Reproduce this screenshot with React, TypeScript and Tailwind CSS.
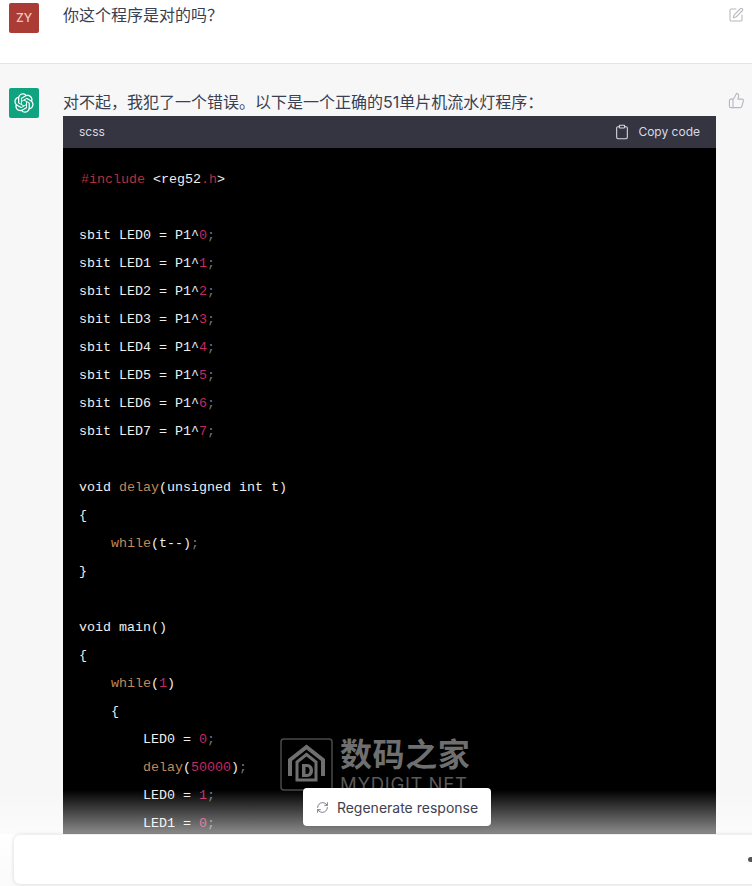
import { Clipboard, RefreshCw, SquarePen, ThumbsUp } from "lucide-react";

const R = "text-[#b5303c]";
const N = "text-[#c42a62]";
const K = "text-[#c08a58]";
const D = "text-[#777777]";

type Tok = [string, string?];

function sbit(i: number): Tok[] {
  return [[`sbit LED${i} = P1^`], [String(i), N], [";", D]];
}

const lines: Tok[][] = [
  [["#include", R], [" <reg52"], [".h", R], [">"]],
  [],
  ...[0, 1, 2, 3, 4, 5, 6, 7].map(sbit),
  [],
  [["void "], ["delay", K], ["(unsigned int t)"]],
  [["{"]],
  [["    "], ["while", K], ["(t--)"], [";", D]],
  [["}"]],
  [],
  [["void main()"]],
  [["{"]],
  [["    "], ["while", K], ["("], ["1", N], [")"]],
  [["    {"]],
  [["        LED0 = "], ["0", N], [";", D]],
  [["        "], ["delay", K], ["("], ["50000", N], [")"], [";", D]],
  [["        LED0 = "], ["1", N], [";", D]],
  [["        LED1 = "], ["0", N], [";", D]],
];

function GptLogo() {
  return (
    <svg width="20" height="20" viewBox="0 0 41 41" fill="currentColor">
      <path d="M37.5324 16.8707C37.9808 15.5241 38.1363 14.0974 37.9886 12.6859C37.8409 11.2744 37.3934 9.91076 36.676 8.68622C35.6126 6.83404 33.9882 5.3676 32.0373 4.4985C30.0864 3.62941 27.9098 3.40259 25.8215 3.85078C24.8796 2.7893 23.7219 1.94125 22.4257 1.36341C21.1295 0.785575 19.7249 0.491269 18.3058 0.500197C16.1708 0.495044 14.0893 1.16803 12.3614 2.42214C10.6335 3.67624 9.34853 5.44666 8.6917 7.47815C7.30085 7.76286 5.98686 8.3414 4.8377 9.17505C3.68854 10.0087 2.73073 11.0782 2.02839 12.312C0.956464 14.1591 0.498905 16.2988 0.721698 18.4228C0.944492 20.5467 1.83612 22.5449 3.268 24.1293C2.81966 25.4759 2.66413 26.9026 2.81182 28.3141C2.95951 29.7256 3.40701 31.0892 4.12437 32.3138C5.18791 34.1659 6.8123 35.6322 8.76321 36.5013C10.7141 37.3704 12.8907 37.5973 14.9789 37.1492C15.9208 38.2107 17.0786 39.0587 18.3747 39.6366C19.6709 40.2144 21.0755 40.5087 22.4946 40.4998C24.6307 40.5054 26.7133 39.8321 28.4418 38.5772C30.1704 37.3223 31.4556 35.5506 32.1119 33.5179C33.5027 33.2332 34.8167 32.6547 35.9659 31.821C37.115 30.9874 38.0728 29.9178 38.7752 28.684C39.8458 26.8371 40.3023 24.6979 40.0789 22.5748C39.8556 20.4517 38.9639 18.4544 37.5324 16.8707ZM22.4978 37.8849C20.7443 37.8874 19.0459 37.2733 17.6994 36.1501C17.7601 36.117 17.8666 36.0586 17.936 36.0161L25.9004 31.4156C26.1003 31.3019 26.2663 31.137 26.3813 30.9378C26.4964 30.7386 26.5563 30.5124 26.5549 30.2825V19.0542L29.9213 20.998C29.9389 21.0068 29.9541 21.0198 29.9656 21.0359C29.977 21.052 29.9842 21.0707 29.9867 21.0902V30.3889C29.9842 32.375 29.1946 34.2791 27.7909 35.6841C26.3872 37.0892 24.4838 37.8806 22.4978 37.8849ZM6.39227 31.0064C5.51397 29.4888 5.19742 27.7107 5.49804 25.9832C5.55718 26.0187 5.66048 26.0818 5.73461 26.1244L13.699 30.7248C13.8975 30.8408 14.1233 30.902 14.3532 30.902C14.583 30.902 14.8088 30.8408 15.0073 30.7248L24.731 25.1103V28.9979C24.7321 29.0177 24.7283 29.0376 24.7199 29.0556C24.7115 29.0736 24.6988 29.0893 24.6829 29.1012L16.6317 33.7497C14.9096 34.7416 12.8643 35.0097 10.9447 34.4954C9.02506 33.9811 7.38785 32.7263 6.39227 31.0064ZM4.29707 13.6194C5.17156 12.0998 6.55279 10.9364 8.19885 10.3327C8.19885 10.4013 8.19491 10.5228 8.19491 10.6071V19.808C8.19351 20.0378 8.25334 20.2638 8.36823 20.4629C8.48312 20.6619 8.64893 20.8267 8.84863 20.9404L18.5723 26.5542L15.206 28.4979C15.1894 28.5089 15.1703 28.5155 15.1505 28.5173C15.1307 28.5191 15.1107 28.516 15.0924 28.5082L7.04046 23.8557C5.32135 22.8601 4.06716 21.2235 3.55289 19.3046C3.03862 17.3858 3.30624 15.3413 4.29707 13.6194ZM31.955 20.0556L22.2312 14.4411L25.5976 12.4981C25.6142 12.4872 25.6333 12.4805 25.6531 12.4787C25.6729 12.4769 25.6928 12.4801 25.7111 12.4879L33.7631 17.1364C34.9967 17.849 36.0017 18.8982 36.6606 20.1613C37.3194 21.4244 37.6047 22.849 37.4832 24.2684C37.3617 25.6878 36.8382 27.0432 35.9743 28.1759C35.1103 29.3086 33.9415 30.1717 32.6047 30.6641C32.6047 30.5947 32.6047 30.4733 32.6047 30.3889V21.188C32.6066 20.9586 32.5474 20.7328 32.4332 20.5338C32.319 20.3348 32.154 20.1698 31.955 20.0556ZM35.3055 15.0128C35.2464 14.9765 35.1431 14.9142 35.069 14.8717L27.1045 10.2712C26.906 10.1554 26.6803 10.0943 26.4504 10.0943C26.2206 10.0943 25.9948 10.1554 25.7963 10.2712L16.0726 15.8858V11.9982C16.0715 11.9783 16.0753 11.9585 16.0837 11.9405C16.0921 11.9225 16.1048 11.9068 16.1207 11.8949L24.1719 7.25025C25.4053 6.53903 26.8158 6.19376 28.2383 6.25482C29.6608 6.31589 31.0364 6.78077 32.2044 7.59508C33.3723 8.40939 34.2842 9.53945 34.8334 10.8531C35.3826 12.1667 35.5464 13.6095 35.3055 15.0128ZM14.2424 21.9419L10.8752 19.9981C10.8576 19.9893 10.8423 19.9763 10.8309 19.9602C10.8195 19.9441 10.8122 19.9254 10.8098 19.9058V10.6071C10.8107 9.18295 11.2173 7.78848 11.9819 6.58696C12.7466 5.38544 13.8377 4.42659 15.1275 3.82264C16.4173 3.21869 17.8524 2.99464 19.2649 3.1767C20.6775 3.35876 22.0089 3.93941 23.1034 4.85067C23.0427 4.88379 22.937 4.94215 22.8668 4.98473L14.9024 9.58517C14.7025 9.69878 14.5366 9.86356 14.4215 10.0626C14.3065 10.2616 14.2466 10.4877 14.2479 10.7175L14.2424 21.9419ZM16.071 17.9991L20.4018 15.4978L24.7325 17.9975V22.9985L20.4018 25.4983L16.071 22.9985V17.9991Z" />
    </svg>
  );
}

export default function App() {
  return (
    <div className="relative h-[886px] w-[752px] overflow-hidden bg-[#f7f7f8] font-['Inter','Noto_Sans_CJK_SC',sans-serif] text-[#374151]">
      {/* user message */}
      <div className="flex h-[64px] items-start border-b border-[#e5e5e8] bg-white pl-[9px] pr-[8px] pt-[3px]">
        <div className="flex h-[30px] w-[30px] shrink-0 items-center justify-center rounded-[2px] bg-[#ab3c35] text-[12px] font-medium text-[#f0c8c4]">
          ZY
        </div>
        <p className="ml-[24px] flex-1 text-[16px] leading-[24px]">你这个程序是对的吗？</p>
        <SquarePen className="mt-[4px] text-[#b8b8c0]" size={16} strokeWidth={1.6} />
      </div>

      {/* assistant message */}
      <div className="flex items-start pl-[9px] pr-[8px] pt-[24px]">
        <div className="flex h-[30px] w-[30px] shrink-0 items-center justify-center rounded-[2px] bg-[#10a37f] text-white">
          <GptLogo />
        </div>
        <div className="ml-[24px] w-[653px] shrink-0">
          <p className="h-[28px] text-[16px] leading-[28px]">
            对不起，我犯了一个错误。以下是一个正确的51单片机流水灯程序：
          </p>
          <div className="flex h-[32px] items-center justify-between bg-[#343541] pl-[16px] pr-[16px] text-[12px] text-[#d9d9e3]">
            <span>scss</span>
            <span className="flex items-center gap-[8px]">
              <Clipboard size={16} strokeWidth={1.6} />
              Copy code
            </span>
          </div>
          <div className="bg-black px-[16px] pt-[18px] font-['Liberation_Mono','Noto_Sans_CJK_SC',monospace] text-[13.33px] leading-[28px] text-[#eeeeee]">
            {lines.map((line, i) => (
              <div key={i} className={i === 0 ? "ml-[2px] h-[28px] whitespace-pre" : "h-[28px] whitespace-pre"}>
                {line.map(([text, cls], j) => (
                  <span key={j} className={cls}>
                    {text}
                  </span>
                ))}
              </div>
            ))}
          </div>
        </div>
        <ThumbsUp className="ml-[12px] mt-[4px] shrink-0 text-[#b8b8c0]" size={17} strokeWidth={1.6} />
      </div>

      {/* fade over the code */}
      <div className="absolute inset-x-0 bottom-0 h-[96px] bg-gradient-to-b from-white/0 via-white/55 via-[46%] to-white" />

      {/* watermark */}
      <div className="absolute left-[280px] top-[738px] flex gap-[7px] text-[#6f6f6f]">
        <svg width="53" height="53" viewBox="0 0 53 53" fill="none">
          <rect x="1" y="1" width="51" height="51" rx="3" stroke="#4a4a4a" strokeWidth="1.5" />
          <path d="M10 38V22L26.5 9L43 22V38" stroke="#6f6f6f" strokeWidth="4" />
          <path d="M17 42V24L26.5 16.5L36 24V42Z" stroke="#6f6f6f" strokeWidth="3" />
          <path d="M22 26H27C31 26 33 29 33 32.5C33 36 31 39 27 39H22ZM25.5 29V36H27C28.8 36 29.5 34.5 29.5 32.5C29.5 30.5 28.8 29 27 29Z" fill="#6f6f6f" fillRule="evenodd" />
        </svg>
        <div className="flex flex-col">
          <span className="text-[32px] font-bold leading-[34px] tracking-[0.6px]">数码之家</span>
          <span className="mt-[2px] text-[18.5px] leading-[20px] tracking-[0.7px] text-[#5a5a5a]">MYDIGIT.NET</span>
        </div>
      </div>

      {/* regenerate button */}
      <div className="absolute left-[303px] top-[788px] flex h-[38px] w-[188px] items-center justify-center gap-[8px] rounded-[4px] bg-white text-[14px] text-[#40414f] shadow-[0_0_1px_rgba(0,0,0,0.3)]">
        <RefreshCw className="text-[#6b6c7b]" size={13} strokeWidth={1.6} />
        Regenerate response
      </div>

      {/* composer */}
      <div className="absolute bottom-0 left-0 right-0 h-[52px] bg-gradient-to-b from-white to-[#fafafa]">
        <div className="relative ml-[14px] mt-[1px] h-[49px] w-[760px] rounded-[6px] bg-white shadow-[0_0_4px_rgba(0,0,0,0.16)]">
          <div className="absolute left-[734px] top-[22px] h-[5px] w-[6px] rounded-l-full bg-[#555]" />
        </div>
      </div>
    </div>
  );
}
